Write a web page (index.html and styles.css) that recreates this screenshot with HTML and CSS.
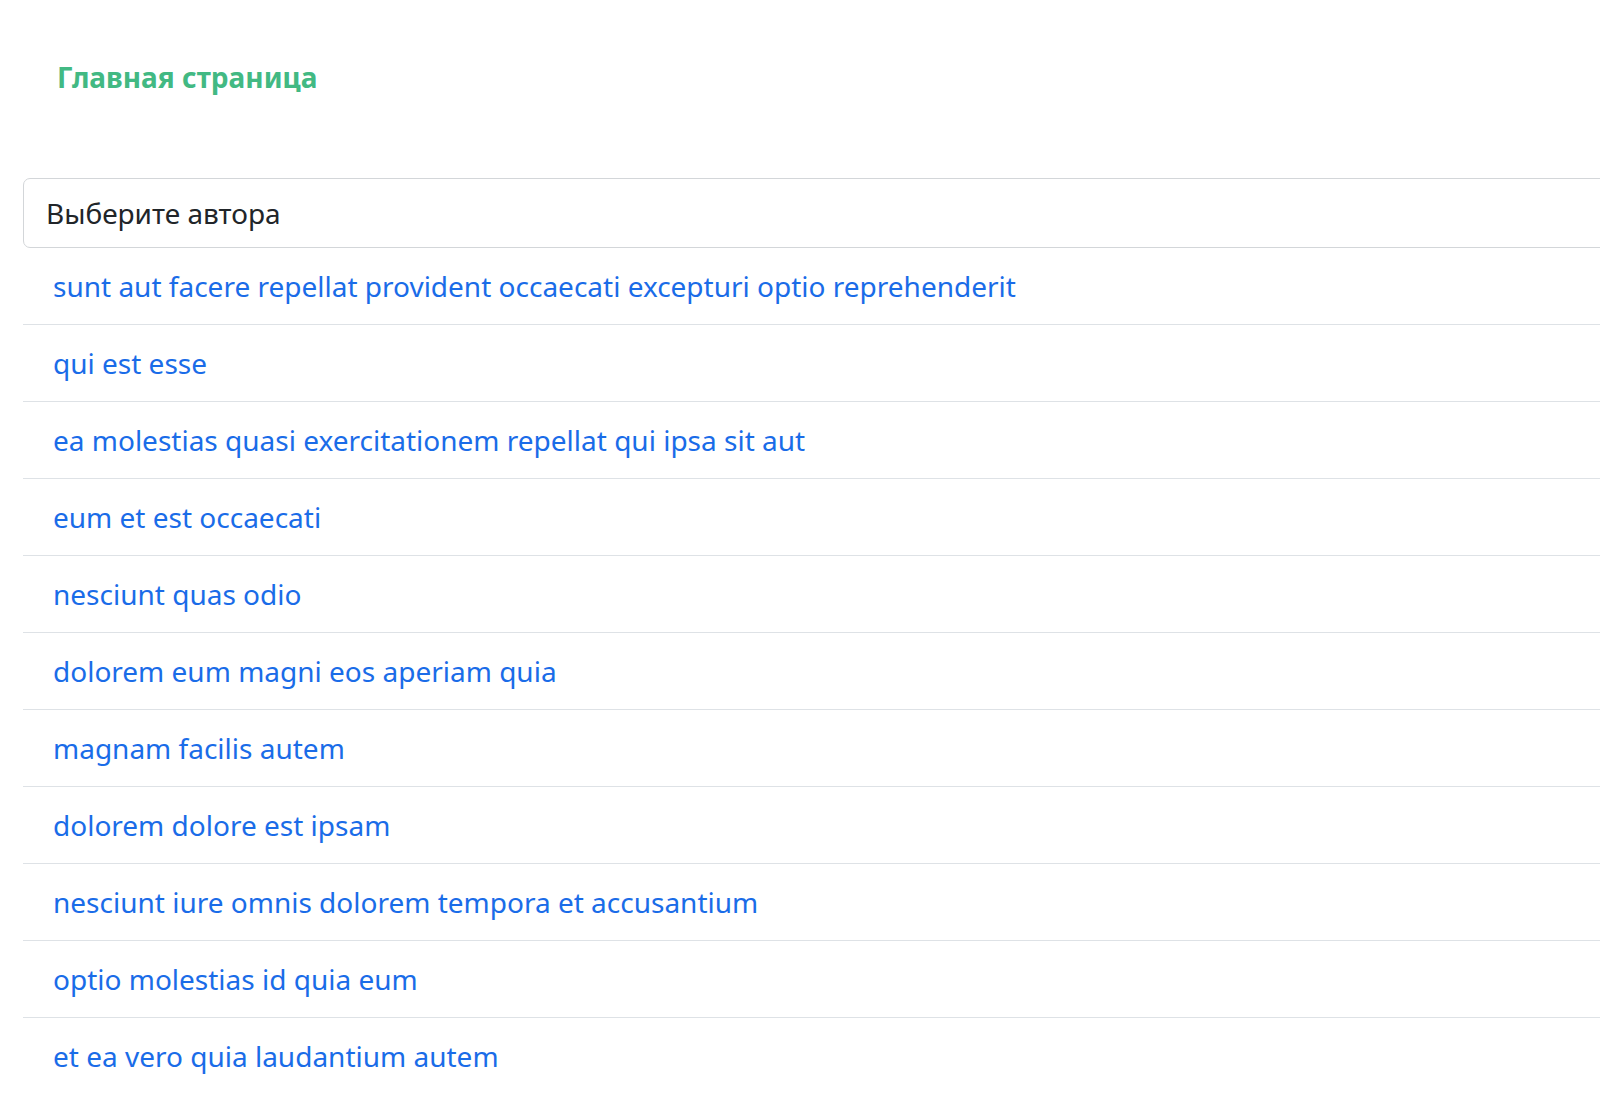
FILE: index.html
```html
<!DOCTYPE html>
<html lang="ru">
<head>
<meta charset="utf-8">
<title>Главная страница</title>
<link rel="stylesheet" href="styles.css">
</head>
<body>
<div class="app">
  <nav class="nav">
    <a class="nav-link" href="#">Главная страница</a>
  </nav>
  <div class="content">
    <div class="select">Выберите автора</div>
    <ul class="list">
      <li class="item"><a href="#">sunt aut facere repellat provident occaecati excepturi optio reprehenderit</a></li>
      <li class="item"><a href="#">qui est esse</a></li>
      <li class="item"><a href="#">ea molestias quasi exercitationem repellat qui ipsa sit aut</a></li>
      <li class="item"><a href="#">eum et est occaecati</a></li>
      <li class="item"><a href="#">nesciunt quas odio</a></li>
      <li class="item"><a href="#">dolorem eum magni eos aperiam quia</a></li>
      <li class="item"><a href="#">magnam facilis autem</a></li>
      <li class="item"><a href="#">dolorem dolore est ipsam</a></li>
      <li class="item"><a href="#">nesciunt iure omnis dolorem tempora et accusantium</a></li>
      <li class="item"><a href="#">optio molestias id quia eum</a></li>
      <li class="item"><a href="#">et ea vero quia laudantium autem</a></li>
    </ul>
  </div>
</div>
</body>
</html>
```

FILE: styles.css
```css
html, body {
  margin: 0;
  padding: 0;
  background: #fff;
  overflow: hidden;
}
body {
  font-family: "Noto Sans", "Open Sans", sans-serif;
  font-size: 30px;
  line-height: 1.5;
  color: #212529;
}
.app {
  width: 1700px;
}
.nav {
  padding: 54px 57px 78px;
  line-height: 45px;
}
.nav-link {
  color: #42b983;
  font-weight: bold;
  text-decoration: none;
  font-size: 28px;
}
.content {
  padding: 0 0 0 23px;
}
.select {
  box-sizing: border-box;
  height: 70px;
  border: 1px solid #d3d6d9;
  border-radius: 7px;
  padding: 0 22px;
  display: flex;
  align-items: center;
  font-size: 28px;
  color: #212529;
}
.list {
  list-style: none;
  margin: 0;
  padding: 0;
}
.item {
  height: 76px;
  padding: 0 30px;
  border-bottom: 1px solid #dee2e6;
  display: flex;
  align-items: center;
}
.item a {
  color: #1a6ce8;
  text-decoration: none;
  font-size: 28px;
}
```
